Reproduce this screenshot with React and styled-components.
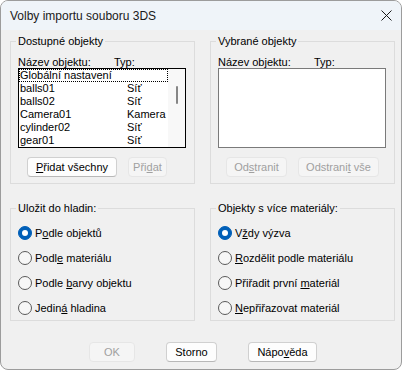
import React from 'react';
import styled, { createGlobalStyle } from 'styled-components';

const GlobalStyle = createGlobalStyle`
    html, body {
        margin: 0;
        padding: 0;
        background: #ffffff;
    }
    body {
        font-family: "Liberation Sans", Arial, sans-serif;
        font-size: 11px;
        color: #000;
    }
`

const Window = styled.div`
    box-sizing: border-box;
    width: 402px;
    height: 370px;
    border: 1px solid #9c9c9c;
    border-radius: 8px;
    overflow: hidden;
    background: #f0f0f0;
    display: flex;
    flex-direction: column;
`

const TitleBar = styled.div`
    height: 29px;
    flex: none;
    background: #eff4f9;
    display: flex;
    align-items: center;
    justify-content: space-between;
    padding: 0 9px 0 9px;

    .title {
        font-size: 12px;
        color: #1a1a1a;
    }
`

const Body = styled.div`
    display: grid;
    grid-template-columns: 185px 185px;
    column-gap: 15px;
    row-gap: 18px;
    padding: 5px 0 0 9px;
`

const Group = styled.fieldset`
    box-sizing: border-box;
    margin: 0;
    height: ${p => p.$h}px;
    padding: 0 8px 6px 7px;
    border: 1px solid #dcdcdc;
    min-width: 0;
    display: flex;
    flex-direction: column;

    legend {
        margin-left: -2px;
        padding: 0 2px;
        line-height: 13px;
        color: #000;
    }
`

const Header = styled.div`
    display: flex;
    height: 12px;
    line-height: 12px;
    margin-top: 8px;

    span:first-child {
        width: 96px;
    }
`

const ListBox = styled.div`
    box-sizing: border-box;
    height: 80px;
    background: #fff;
    border: 1px solid ${p => (p.$focused ? '#000' : '#7a7a7a')};
    display: flex;
`

const Items = styled.div`
    flex: 1;
    display: flex;
    flex-direction: column;
`

const Item = styled.div`
    display: flex;
    height: 13px;
    line-height: 13px;
    padding-left: 1px;
    color: #000;
    outline: ${p => (p.$focus ? '1px dotted #000' : 'none')};
    outline-offset: -1px;
    white-space: nowrap;

    .name {
        width: 107px;
    }
`

const ScrollBar = styled.div`
    width: 17px;
    background: #f8f8f8;
    display: flex;
    justify-content: center;

    .thumb {
        width: 2px;
        height: 18px;
        margin-top: 17px;
        border-radius: 1px;
        background: #868686;
    }
`

const ButtonRow = styled.div`
    display: flex;
    gap: 11px;
    margin-top: 9px;
    padding-left: ${p => p.$indent}px;
`

const Button = styled.div`
    box-sizing: border-box;
    width: ${p => p.$w}px;
    height: 20px;
    display: flex;
    align-items: center;
    justify-content: center;
    border-radius: 4px;
    background: ${p => (p.$disabled ? '#f5f5f5' : '#fdfdfd')};
    border: 1px solid ${p => (p.$disabled ? '#e6e6e6' : '#d0d0d0')};
    border-bottom-color: ${p => (p.$disabled ? '#e6e6e6' : '#b8b8b8')};
    color: ${p => (p.$disabled ? '#a0a0a0' : '#000')};
    white-space: nowrap;
`

const RadioList = styled.div`
    display: flex;
    flex-direction: column;
    padding-top: 5px;
`

const RadioRow = styled.div`
    height: 25px;
    display: flex;
    align-items: center;
    gap: 3px;
    white-space: nowrap;
`

const Radio = styled.span`
    box-sizing: border-box;
    width: 14px;
    height: 14px;
    border-radius: 50%;
    flex: none;
    display: flex;
    align-items: center;
    justify-content: center;
    background: ${p => (p.$checked ? '#005fb8' : '#f7f7f7')};
    border: 1px solid ${p => (p.$checked ? '#005fb8' : '#5a5a5a')};

    &::after {
        content: '';
        display: ${p => (p.$checked ? 'block' : 'none')};
        width: 6px;
        height: 6px;
        border-radius: 50%;
        background: #fff;
    }
`

const Footer = styled.div`
    display: flex;
    justify-content: center;
    gap: 31px;
    margin-top: 21px;
    padding-left: 4px;
`

const Key = styled.u`
    text-decoration: underline;
    text-underline-offset: 1px;
`

const objects = [
    ['Globální nastavení', ''],
    ['balls01', 'Síť'],
    ['balls02', 'Síť'],
    ['Camera01', 'Kamera'],
    ['cylinder02', 'Síť'],
    ['gear01', 'Síť'],
]

function CloseIcon() {
    return (
        <svg width="11" height="11" viewBox="0 0 11 11">
            <path d="M0.5 0.5 L10.5 10.5 M10.5 0.5 L0.5 10.5" stroke="#1a1a1a" strokeWidth="1" fill="none" />
        </svg>
    );
}

function Option({ checked, children }) {
    return (
        <RadioRow>
            <Radio $checked={checked} />
            <span>{children}</span>
        </RadioRow>
    );
}

function App() {
    return (
        <Window>
            <GlobalStyle />
            <TitleBar>
                <span className='title'>Volby importu souboru 3DS</span>
                <CloseIcon />
            </TitleBar>
            <Body>
                <Group $h={149}>
                    <legend>Dostupné objekty</legend>
                    <Header><span>Název objektu:</span><span>Typ:</span></Header>
                    <ListBox $focused>
                        <Items>
                            {objects.map(([name, type], i) => (
                                <Item key={name} $focus={i === 0}>
                                    <span className='name'>{name}</span>
                                    <span>{type}</span>
                                </Item>
                            ))}
                        </Items>
                        <ScrollBar><div className='thumb'></div></ScrollBar>
                    </ListBox>
                    <ButtonRow $indent={9}>
                        <Button $w={90}><span><Key>P</Key>řidat všechny</span></Button>
                        <Button $w={39} $disabled><span>Při<Key>d</Key>at</span></Button>
                    </ButtonRow>
                </Group>
                <Group $h={149}>
                    <legend>Vybrané objekty</legend>
                    <Header><span>Název objektu:</span><span>Typ:</span></Header>
                    <ListBox>
                        <Items></Items>
                    </ListBox>
                    <ButtonRow $indent={8}>
                        <Button $w={61} $disabled><span>Od<Key>s</Key>tranit</span></Button>
                        <Button $w={81} $disabled><span>Odstrani<Key>t</Key> vše</span></Button>
                    </ButtonRow>
                </Group>
                <Group $h={119}>
                    <legend>Uložit do hladin:</legend>
                    <RadioList>
                        <Option checked>P<Key>o</Key>dle objektů</Option>
                        <Option>Podl<Key>e</Key> materiálu</Option>
                        <Option>Podle <Key>b</Key>arvy objektu</Option>
                        <Option>Jedin<Key>á</Key> hladina</Option>
                    </RadioList>
                </Group>
                <Group $h={119}>
                    <legend>Objekty s více materiály:</legend>
                    <RadioList>
                        <Option checked>V<Key>ž</Key>dy výzva</Option>
                        <Option><Key>R</Key>ozdělit podle materiálu</Option>
                        <Option>Přiřadit první <Key>m</Key>ateriál</Option>
                        <Option><Key>N</Key>epřiřazovat materiál</Option>
                    </RadioList>
                </Group>
            </Body>
            <Footer>
                <Button $w={46} $disabled>OK</Button>
                <Button $w={51}>Storno</Button>
                <Button $w={69}><span>Nápo<Key>v</Key>ěda</span></Button>
            </Footer>
        </Window>
    );
}

export default App;
